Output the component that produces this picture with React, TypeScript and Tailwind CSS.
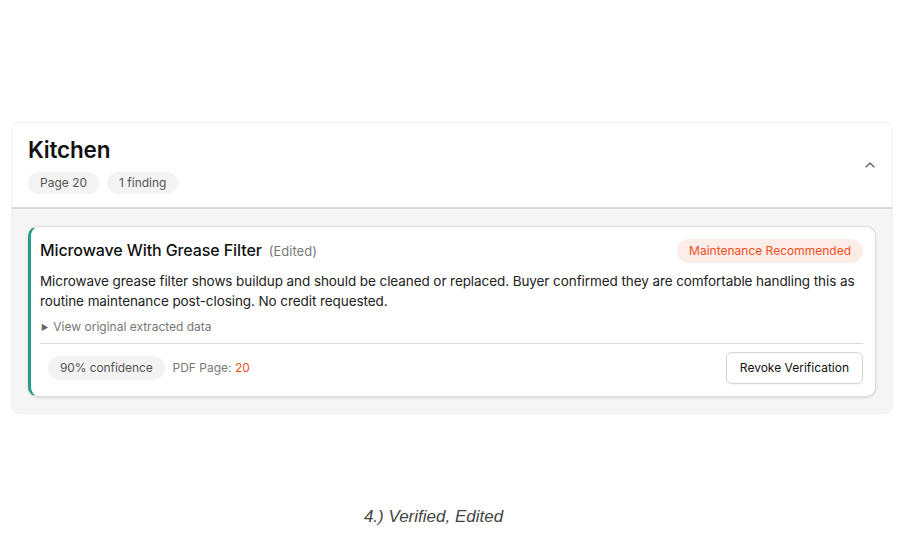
import { ChevronUp } from "lucide-react";

export default function App() {
  return (
    <div className="min-h-[536px] w-[910px] bg-white pt-[122px] font-['Inter',_'Noto_Sans',sans-serif] text-[#111]">
      <section className="ml-[11px] w-[882px] overflow-hidden rounded-lg border border-[#f0f0f0] bg-[#f5f5f5]">
        <header className="flex items-center justify-between border-b-2 border-[#d9d9d9] bg-white pl-4 pr-4 pt-[13px] pb-[13px]">
          <div>
            <h1 className="text-[22.5px] font-semibold leading-7 tracking-[-0.2px]">Kitchen</h1>
            <div className="mt-2 flex gap-2">
              <span className="rounded-full bg-[#f3f3f3] px-3 py-[3px] text-xs leading-4 text-[#555]">Page 20</span>
              <span className="rounded-full bg-[#f3f3f3] px-3 py-[3px] text-xs leading-4 text-[#555]">1 finding</span>
            </div>
          </div>
          <ChevronUp className="mr-[-2px] h-4 w-4 text-[#555]" strokeWidth={1.75} />
        </header>

        <div className="px-4 pb-4 pt-[17px]">
          <article className="rounded-[10px] border border-l-[3px] border-[#dcdcdc] border-l-[#2a9d8a] bg-white p-3 pl-[9px] shadow-[0_1px_3px_rgba(0,0,0,0.12)]">
            <div className="flex items-center justify-between">
              <div className="flex items-baseline gap-[7px]">
                <h2 className="text-[16px] font-medium leading-5 tracking-[-0.1px]">Microwave With Grease Filter</h2>
                <span className="text-[13px] text-[#777]">(Edited)</span>
              </div>
              <span className="rounded-full bg-[#fdede8] px-3 py-1 text-xs leading-4 text-[#f04f1c]">
                Maintenance Recommended
              </span>
            </div>

            <p className="mt-2 text-[13.5px] leading-5 tracking-[-0.08px] text-[#222]">
              Microwave grease filter shows buildup and should be cleaned or replaced. Buyer confirmed they are comfortable handling this as routine maintenance post-closing. No credit requested.
            </p>

            <div className="mt-2 flex items-center gap-[5px] text-xs leading-4 text-[#777]">
              <span className="ml-[1px] text-[8px] text-[#666]">▶</span>
              <span>View original extracted data</span>
            </div>

            <div className="mt-2 border-t border-[#d9d9d9]" />

            <div className="flex items-center justify-between pt-2">
              <div className="flex items-center gap-2 pl-2">
                <span className="rounded-full bg-[#f3f3f3] px-3 py-1 text-xs leading-4 tracking-[-0.1px] text-[#555]">90% confidence</span>
                <span className="text-xs text-[#777]">
                  PDF Page: <span className="text-[#f04f1c]">20</span>
                </span>
              </div>
              <button className="rounded-md border border-[#d4d4d4] bg-white px-[13px] py-[7px] text-xs leading-4 text-[#111] shadow-[0_1px_1px_rgba(0,0,0,0.04)]">
                Revoke Verification
              </button>
            </div>
          </article>
        </div>
      </section>

      <p className="mt-[90px] w-[867px] text-center font-['Liberation_Sans',_Arial,sans-serif] text-[17px] italic text-[#444]">
        4.) Verified, Edited
      </p>
    </div>
  );
}
